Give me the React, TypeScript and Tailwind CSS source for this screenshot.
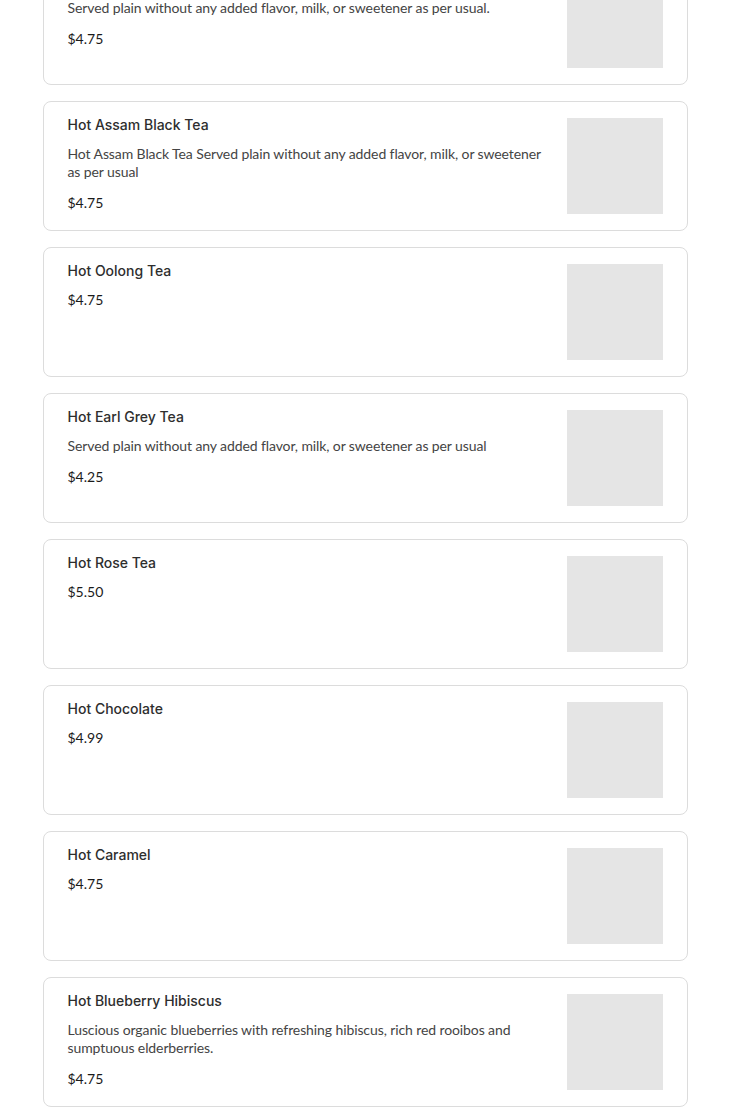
import React from "react";

type Item = { name: string; desc?: string; price: string };

const items: Item[] = [
  { name: "Hot Green Tea", desc: "Served plain without any added flavor, milk, or sweetener as per usual.", price: "$4.75" },
  { name: "Hot Assam Black Tea", desc: "Hot Assam Black Tea Served plain without any added flavor, milk, or sweetener as per usual", price: "$4.75" },
  { name: "Hot Oolong Tea", price: "$4.75" },
  { name: "Hot Earl Grey Tea", desc: "Served plain without any added flavor, milk, or sweetener as per usual", price: "$4.25" },
  { name: "Hot Rose Tea", price: "$5.50" },
  { name: "Hot Chocolate", price: "$4.99" },
  { name: "Hot Caramel", price: "$4.75" },
  { name: "Hot Blueberry Hibiscus", desc: "Luscious organic blueberries with refreshing hibiscus, rich red rooibos and sumptuous elderberries.", price: "$4.75" },
];

export default function App() {
  return (
    <div className="bg-white min-h-[1116px] overflow-hidden">
      <div className="w-[645px] mx-auto -mt-[45px] flex flex-col gap-4">
        {items.map((it) => (
          <div
            key={it.name}
            className="flex gap-4 border border-[#dcdcdc] rounded-[8px] px-6 py-4 bg-white"
          >
            <div className="flex-1 min-w-0 flex flex-col">
              <div
                className="text-[14px] leading-[14px] font-medium text-[#2e2e2e]"
                style={{ fontFamily: "Inter, 'Open Sans', sans-serif" }}
              >
                {it.name}
              </div>
              {it.desc && (
                <div
                  className="mt-[13px] text-[14px] leading-[18px] tracking-[-0.1px] text-[#444444]"
                  style={{ fontFamily: "Lato, 'Liberation Sans', sans-serif" }}
                >
                  {it.desc}
                </div>
              )}
              <div
                className="mt-3 text-[14px] leading-[20px] text-[#1a1a1a]"
                style={{ fontFamily: "Lato, 'Liberation Sans', sans-serif" }}
              >
                {it.price}
              </div>
            </div>
            <div className="w-24 h-24 shrink-0 bg-[#e5e5e5]" />
          </div>
        ))}
      </div>
    </div>
  );
}
